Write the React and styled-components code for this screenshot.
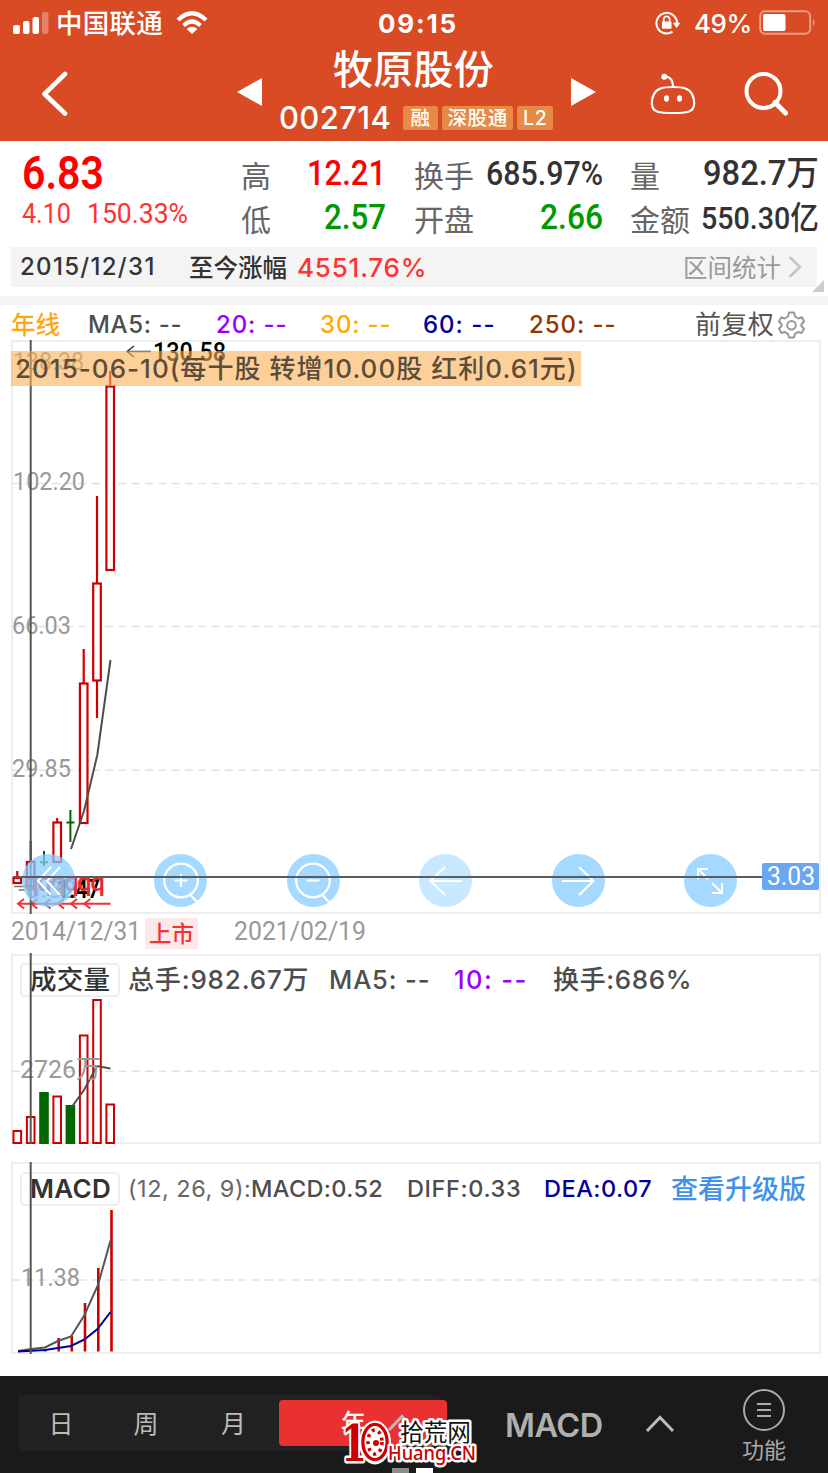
import React, { useLayoutEffect, useRef, useState } from 'react';
import styled, { createGlobalStyle } from 'styled-components';

const GlobalStyle = createGlobalStyle`
  * {
    box-sizing: border-box;
  }

  body {
    margin: 0;
    background: #fff;
    overflow: hidden;
    font-family: Inter, "Noto Sans CJK SC", sans-serif;
  }

  svg {
    display: block;
    flex: none;
  }
`;

const Page = styled.div`
  width: 828px;
  height: 1473px;
  display: flex;
  flex-direction: column;
  background: #fff;
`;

// Text fitted to a set width: numerals are squeezed, the rest is tracked
const FitBox = styled.span`
  display: block;
  flex: none;
  width: ${props => props.$w}px;
  margin-left: ${props => props.$ml || 0}px;
  padding-top: ${props => props.$drop || 0}px;
  white-space: pre;
  font-size: ${props => props.$size}px;
  font-weight: ${props => props.$weight || 500};
  font-family: ${props => props.$din ? 'Roboto' : 'Inter'}, "Noto Sans CJK SC", sans-serif;
  color: ${props => props.$color};
  line-height: 1.2;
`;

const FitInner = styled.span`
  display: inline-block;
  transform-origin: left center;
`;

const Fit = ({ w, ml, drop, size, weight, din, color = '#333', children }) => {
  const ref = useRef(null);
  const [fit, setFit] = useState(null);

  useLayoutEffect(() => {
    const natural = ref.current.getBoundingClientRect().width;
    if (din) {
      setFit({ transform: `scaleX(${w / natural})` });
    } else {
      setFit({ letterSpacing: `${(w - natural) / (children.length - 0.5)}px` });
    }
  }, []);

  return (
    <FitBox $w={w} $ml={ml} $drop={drop} $size={size} $weight={weight} $din={din} $color={color}>
      <FitInner ref={ref} style={fit}>{children}</FitInner>
    </FitBox>
  );
};

// Header
const Header = styled.header`
  height: 141px;
  background: #d94b25;
  color: #fff;
`;

const StatusBar = styled.div`
  display: flex;
  align-items: center;
  height: 46px;
  padding-left: 13px;
`;

const Nav = styled.div`
  display: flex;
  align-items: center;
  height: 95px;
  padding-left: 41px;
`;

const Spaced = styled.div`
  flex: none;
  margin: ${props => props.$top || 0}px 0 0 ${props => props.$left}px;
`;

const TitleBlock = styled.div`
  width: 274px;
  height: 95px;
  margin-left: 17px;
`;

const TitleLine = styled.div`
  display: flex;
  align-items: center;
  height: 46px;
  padding: 2px 0 0 54px;
`;

const CodeLine = styled.div`
  display: flex;
  align-items: center;
  height: 46px;
  margin-top: 3px;
`;

const Tag = styled.span`
  display: flex;
  align-items: center;
  justify-content: center;
  width: ${props => props.$w}px;
  height: 24px;
  margin-left: ${props => props.$ml}px;
  border-radius: 2px;
  background: #e58b46;
`;

// Quote
const Quote = styled.section`
  display: flex;
  height: 106px;
  padding: 11px 0 0 22px;
`;

const QuoteColumn = styled.div`
  width: ${props => props.$w}px;
  margin-left: ${props => props.$ml || 0}px;
`;

const QuoteRow = styled.div`
  display: flex;
  align-items: center;
  justify-content: ${props => props.$start ? 'flex-start' : 'space-between'};
  height: ${props => props.$h || 44}px;
`;

const QuoteLabel = styled.span`
  font-size: 30px;
  line-height: 36px;
  padding-top: 4px;
  color: #666;
`;

const RangeArea = styled.div`
  position: relative;
  height: 49px;
  padding: 0 11px;
`;

const RangeStrip = styled.div`
  display: flex;
  align-items: center;
  height: 40px;
  padding-left: 9px;
  background: #f4f4f4;
`;

const Corner = styled.div`
  position: absolute;
  right: 4px;
  bottom: 4px;
  border-left: 12px solid transparent;
  border-bottom: 12px solid #ccc;
`;

const Divider = styled.div`
  height: 9px;
  background: #f4f4f4;
`;

const Legend = styled.div`
  display: flex;
  align-items: center;
  height: ${props => props.$h}px;
  padding: ${props => props.$pt || 0}px 0 0 ${props => props.$pl || 0}px;
`;

// Charts
const Panel = styled.section`
  position: relative;
  width: 810px;
  height: ${props => props.$h}px;
  margin: ${props => props.$mt || 0}px 0 0 11px;
  padding: ${props => props.$pt || 0}px 0 0 7px;
  border: 2px solid #eee;
`;

const Plot = styled.svg`
  position: absolute;
  left: -13px;
  top: -2px;
  overflow: visible;
  font-family: Roboto, "Noto Sans CJK SC", sans-serif;
`;

const Banner = styled.div`
  position: absolute;
  top: 9px;
  left: -2px;
  display: flex;
  align-items: center;
  width: 570px;
  height: 35px;
  background: rgba(252, 177, 87, 0.6);
`;

const Tools = styled.div`
  position: absolute;
  left: 9px;
  top: 512px;
  display: flex;
  gap: 79.4px;
`;

const ToolButton = styled.button`
  display: flex;
  align-items: center;
  justify-content: center;
  width: 53px;
  height: 53px;
  padding: 0;
  border: 0;
  border-radius: 50%;
  background: rgba(135, 204, 255, 0.75);
  opacity: ${props => props.$off ? 0.6 : 1};
`;

const CrossLine = styled.div`
  position: absolute;
  left: 0;
  top: 534px;
  width: 750px;
  height: 2px;
  background: #5c5c5c;
`;

const PriceTag = styled.div`
  position: absolute;
  left: 749px;
  top: 521px;
  display: flex;
  align-items: center;
  width: 57px;
  height: 27px;
  border-radius: 2px;
  background: #6ba6f3;
`;

const DateRow = styled.div`
  display: flex;
  align-items: center;
  height: 40px;
  padding: 0 0 5px 11px;
`;

const ListedTag = styled.span`
  display: flex;
  align-items: center;
  justify-content: center;
  width: 53px;
  height: 31px;
  margin: 4px 0 0 4px;
  border-radius: 2px;
  background: #fde8ea;
`;

const IndicatorTab = styled.div`
  display: flex;
  align-items: center;
  width: 100px;
  height: 34px;
  border: 2px solid #eee;
  border-radius: 5px;
`;

// Bottom bar
const BottomBar = styled.footer`
  position: relative;
  display: flex;
  height: 97px;
  margin-top: 22px;
  padding: 19px 0 0 18px;
  background: #1a1a1a;
`;

const Periods = styled.div`
  display: flex;
  align-items: center;
  width: 422px;
  height: 56px;
  border-radius: 4px;
  background: #212121;
`;

const Period = styled.div`
  width: ${props => props.$w}px;
  flex: none;
  padding-bottom: 3px;
  text-align: center;
  font-size: 25px;
  color: #bbb;
`;

const ActivePeriod = styled.div`
  display: flex;
  align-items: center;
  flex: none;
  width: 168px;
  height: 46px;
  padding: 0 0 4px 62px;
  border-radius: 4px;
  background: #ea3131;
  font-size: 25px;
  font-weight: 500;
  color: #fff;
`;

const IndicatorPick = styled.div`
  display: flex;
  align-items: center;
  height: 58px;
  margin-left: 65px;
`;

const MoreMenu = styled.div`
  display: flex;
  flex-direction: column;
  align-items: center;
  width: 46px;
  height: 80px;
  margin: -7px 0 0 66px;
  gap: 5px;
`;

const Watermark = styled.div`
  position: absolute;
  left: 342px;
  top: 42px;
`;

const PageDots = styled.div`
  position: absolute;
  left: 392px;
  bottom: 0;
  display: flex;
  gap: 7px;
`;

const PageDot = styled.span`
  width: 17px;
  height: 5px;
  background: ${props => props.$on ? '#fff' : '#8c8c8c'};
`;

const RED = '#cc0000';
const GREEN = '#006600';

const candles = [
  { x: 17.3, top: 878, bottom: 883, high: 871, low: 883 },
  { x: 30.7, top: 862, bottom: 886, high: 841, low: 886 },
  { x: 57.2, top: 822.5, bottom: 862, high: 818, low: 862 },
  { x: 83.7, top: 683.5, bottom: 823, high: 649, low: 823 },
  { x: 97, top: 583.5, bottom: 680.5, high: 496, low: 718 },
  { x: 110.2, top: 386.5, bottom: 570, high: 371, low: 570 },
];

const dojis = [
  { x: 44, y: 862.3, high: 851, low: 866 },
  { x: 70.4, y: 822.6, high: 810, low: 842 },
];

const volumes = [
  { x: 17.3, top: 1131 },
  { x: 30.7, top: 1117 },
  { x: 44, top: 1093, down: true },
  { x: 57.2, top: 1096.5 },
  { x: 70.4, top: 1106, down: true },
  { x: 83.7, top: 1035.5 },
  { x: 97, top: 1000 },
  { x: 110.2, top: 1104.5 },
];

const macdBars = [[45, 1349], [58.7, 1338], [71.8, 1336], [85, 1303], [98.3, 1268], [111.5, 1210]];
const exRights = [18, 31.3, 44.6, 58, 71, 84.3];

const GridLine = ({ y }) => (
  <line x1="12" x2="820" y1={y} y2={y} stroke="#e2e2e2" strokeWidth="1.5" strokeDasharray="8 5.3" />
);

const AxisText = ({ x = 12, y, w = 59, size = 26.5, fill = '#999', weight = 400, children }) => (
  <text x={x} y={y} fontSize={size} fontWeight={weight} fill={fill} textLength={w} lengthAdjust="spacingAndGlyphs">{children}</text>
);

const Caret = () => (
  <svg width="30" height="18" fill="none" stroke="#bbb" strokeWidth="3">
    <path d="M2 16 15 2.5 28 16" />
  </svg>
);

const StatusIcons = () => (
  <>
    <svg width="36" height="24" fill="#fff">
      <rect x="0" y="14" width="7" height="9" rx="2" />
      <rect x="10" y="10" width="6.5" height="13" rx="2" />
      <rect x="19.5" y="6" width="6.5" height="17" rx="2" />
      <rect x="29" y="1" width="6.5" height="22" rx="2" opacity=".3" />
    </svg>
    <Fit w={107} ml={7} drop={2} size={26.5} color="#fff">中国联通</Fit>
    <Spaced $left={13}>
      <svg width="32" height="24" fill="none" stroke="#fff" strokeWidth="4.2">
        <path d="M2 9Q16-4.5 30 9M7.5 14.6Q16 6.5 24.5 14.6" />
        <path d="M10.6 18Q16 13.5 21.4 18L16 23Z" fill="#fff" stroke="none" />
      </svg>
    </Spaced>
    <Fit w={79} ml={170} size={26} drop={1} weight={700} color="#fff">09:15</Fit>
    <Spaced $left={198}>
      <svg width="26" height="24" fill="none" stroke="#fff" strokeWidth="2">
        <path d="M22 13A10.3 10.3 0 1 0 17.5 20.7" />
        <path d="M17.8 11.8h7.6L21.6 17Z" fill="#fff" stroke="none" />
        <rect x="7" y="10.5" width="9.5" height="7.2" fill="#fff" stroke="none" />
        <path d="M8.7 11V8.4a3 3 0 0 1 6 0V11" strokeWidth="1.7" />
      </svg>
    </Spaced>
    <Fit w={58} ml={13} drop={1} size={26} color="#fff">49%</Fit>
    <Spaced $left={7}>
      <svg width="58" height="26">
        <rect x="1.2" y="1.2" width="50" height="22.5" rx="5" fill="none" stroke="#fff" strokeWidth="2" opacity=".45" />
        <rect x="4" y="4" width="22.5" height="17" rx="2" fill="#fff" />
        <path d="M54 8.5Q57 12.5 54 16.5Z" fill="#fff" opacity=".45" />
      </svg>
    </Spaced>
  </>
);

const App = () => (
  <Page>
    <GlobalStyle />

    <Header>
      <StatusBar>
        <StatusIcons />
      </StatusBar>
      <Nav>
        <svg width="27" height="48" fill="none" stroke="#fff" strokeWidth="4.6" strokeLinecap="round" strokeLinejoin="round">
          <path d="M24 4 3.5 24 24 43.5" />
        </svg>
        <Spaced $left={169} $top={-4}>
          <svg width="25" height="28" fill="#fff"><path d="M25 0V28L0 14Z" /></svg>
        </Spaced>
        <TitleBlock>
          <TitleLine>
            <Fit w={161} size={40} color="#fff">牧原股份</Fit>
          </TitleLine>
          <CodeLine>
            <Fit w={112} size={31} color="#fff">002714</Fit>
            <Tag $w={35} $ml={12}><Fit w={20} size={19.5} drop={2} color="#fff">融</Fit></Tag>
            <Tag $w={71} $ml={4}><Fit w={60} size={19.5} drop={2} color="#fff">深股通</Fit></Tag>
            <Tag $w={36} $ml={4}><Fit w={24} size={19.5} drop={1} color="#fff">L2</Fit></Tag>
          </CodeLine>
        </TitleBlock>
        <Spaced $left={18} $top={-4}>
          <svg width="25" height="28" fill="#fff"><path d="M0 0V28L25 14Z" /></svg>
        </Spaced>
        <Spaced $left={54}>
          <svg width="46" height="44" fill="none" stroke="#fff" strokeWidth="2.2">
            <path d="M23 15C34 15 39 16.5 42 22C44 26 44.7 31 43.5 35C42.3 39.5 38 41 23 41S3.7 39.5 2.5 35C1.3 31 2 26 4 22C7 16.5 12 15 23 15Z" />
            <path d="M14.5 4.5C20 4.5 23 8 23 15" />
            <circle cx="14.3" cy="4.7" r="3" fill="#fff" stroke="none" />
            <ellipse cx="16.5" cy="26.5" rx="2.5" ry="3.3" fill="#fff" stroke="none" />
            <ellipse cx="29.5" cy="26.5" rx="2.5" ry="3.3" fill="#fff" stroke="none" />
          </svg>
        </Spaced>
        <Spaced $left={47}>
          <svg width="46" height="46" fill="none" stroke="#fff">
            <circle cx="20.5" cy="20" r="17" strokeWidth="4" />
            <path d="M32 31.5 42.5 42" strokeWidth="5" strokeLinecap="round" />
          </svg>
        </Spaced>
      </Nav>
    </Header>

    <Quote>
      <QuoteColumn $w={219}>
        <QuoteRow $start>
          <Fit w={82} size={46} weight={600} din color="#ff0000">6.83</Fit>
        </QuoteRow>
        <QuoteRow $start $h={35}>
          <Fit w={49} size={27.5} weight={400} din color="#ff3333">4.10</Fit>
          <Fit w={101} ml={16} size={27.5} weight={400} din color="#ff3333">150.33%</Fit>
        </QuoteRow>
      </QuoteColumn>
      <QuoteColumn $w={145}>
        <QuoteRow><QuoteLabel>高</QuoteLabel><Fit w={79} size={35} din color="#ff0000">12.21</Fit></QuoteRow>
        <QuoteRow><QuoteLabel>低</QuoteLabel><Fit w={62} size={35} din color="#009900">2.57</Fit></QuoteRow>
      </QuoteColumn>
      <QuoteColumn $w={189} $ml={28}>
        <QuoteRow><QuoteLabel>换手</QuoteLabel><Fit w={117} size={33} din>685.97%</Fit></QuoteRow>
        <QuoteRow><QuoteLabel>开盘</QuoteLabel><Fit w={63} size={35} din color="#009900">2.66</Fit></QuoteRow>
      </QuoteColumn>
      <QuoteColumn $w={189} $ml={27}>
        <QuoteRow><QuoteLabel>量</QuoteLabel><Fit w={116} size={34.5} din>982.7万</Fit></QuoteRow>
        <QuoteRow><QuoteLabel>金额</QuoteLabel><Fit w={118} size={32} din>550.30亿</Fit></QuoteRow>
      </QuoteColumn>
    </Quote>

    <RangeArea>
      <RangeStrip>
        <Fit w={135} size={24} drop={1}>2015/12/31</Fit>
        <Fit w={98} ml={34} drop={3} size={24.5}>至今涨幅</Fit>
        <Fit w={130} ml={10} size={26} drop={1} color="#ff3333">4551.76%</Fit>
        <Fit w={98} ml={256} drop={3} size={24.5} weight={400} color="#999">区间统计</Fit>
        <Spaced $left={7}>
          <svg width="14" height="22" fill="none" stroke="#c4c4c4" strokeWidth="2.5">
            <path d="M1.5 1 12 11 1.5 21" />
          </svg>
        </Spaced>
      </RangeStrip>
      <Corner />
    </RangeArea>
    <Divider />

    <Legend $h={35} $pl={11} $pt={4}>
      <Fit w={49} drop={2} size={24.5} color="#ffa812">年线</Fit>
      <Fit w={94} ml={28} drop={1} size={24} color="#4d4d4d">MA5: --</Fit>
      <Fit w={71} ml={34} drop={1} size={24} color="#9900ff">20: --</Fit>
      <Fit w={71} ml={33} drop={1} size={24} color="#ffaa00">30: --</Fit>
      <Fit w={72} ml={32} drop={1} size={24} color="#000099">60: --</Fit>
      <Fit w={87} ml={34} drop={1} size={24} color="#993300">250: --</Fit>
      <Fit w={79} ml={79} drop={1} size={26} weight={400} color="#555">前复权</Fit>
      <Spaced $left={4}>
        <svg width="27" height="28" viewBox="0 0 27 28" fill="none" stroke="#999" strokeWidth="2">
          <path d="M11 1.5H16L17 5.5L20.5 7.5L24 6.3L26 10.5L23.4 13.5V15L26 17.8L23.6 22L20.3 21L17 22.8L16 26.5H11L10 22.8L6.7 21L3.4 22L1 17.8L3.6 15V13.5L1 10.5L3.4 6.3L6.7 7.5L10 5.5Z" strokeLinejoin="round" />
          <circle cx="13.5" cy="14.2" r="4.3" />
        </svg>
      </Spaced>
    </Legend>

    <Panel $h={574}>
      <Plot width="828" height="574" viewBox="0 340 828 574">
        <GridLine y={483.5} />
        <GridLine y={626.5} />
        <GridLine y={770.3} />
        <AxisText x={13} y={370} w={71}>138.38</AxisText>
        <AxisText x={13} y={490} w={72}>102.20</AxisText>
        <AxisText y={633.5}>66.03</AxisText>
        <AxisText y={777}>29.85</AxisText>
        <AxisText x={18} y={897.5}>-6.32</AxisText>
        <path d="M127 351.5H151M134 346 127 351.5 134 357" fill="none" stroke="#333" strokeWidth="1.5" />
        <AxisText x={153} y={361} w={73} size={26} weight={500} fill="#000">130.58</AxisText>
        <path d="M14 886.5H30" stroke="#777" strokeWidth="1.5" />
        <text x="57" y="898" fontSize="25" fontWeight="600" fill="#000" textLength="43" lengthAdjust="spacingAndGlyphs">1.47</text>
        <g fill="#fff" stroke={RED} strokeWidth="2.2">
          {candles.map(c => (
            <g key={c.x}>
              <path d={`M${c.x} ${c.high}V${c.top}M${c.x} ${c.bottom}V${c.low}`} />
              <rect x={c.x - 3.8} y={c.top} width="7.6" height={c.bottom - c.top} fillOpacity={c.x > 80 ? 1 : 0} />
            </g>
          ))}
        </g>
        {dojis.map(d => (
          <path key={d.x} d={`M${d.x} ${d.high}V${d.low}M${d.x - 4} ${d.y}H${d.x + 4}`} stroke={GREEN} strokeWidth="2" />
        ))}
        <path d="M71 849 84 811 97.3 755 110.5 660" fill="none" stroke="#4d4d4d" strokeWidth="2" />
        <g stroke="#ee3333" strokeWidth="2" fill="none">
          <path d="M18 903.7H110.5" />
          {exRights.map(x => <path key={x} d={`M${x + 6} 899 ${x} 903.7 ${x + 6} 908.5`} />)}
        </g>
        <g fill="#e62e2e" fontSize="26" fontWeight="500">
          {exRights.map(x => <text key={x} x={x + 6} y="891">q</text>)}
        </g>
        <path d="M30.7 340V914" stroke="#555" strokeWidth="2" />
      </Plot>
      <Banner>
        <Fit w={562} ml={4} size={26} color="#5c4c39">2015-06-10(每十股 转增10.00股 红利0.61元)</Fit>
      </Banner>
      <Tools>
        <ToolButton>
          <svg width="26" height="30" fill="none" stroke="#fff" strokeWidth="2"><path d="M15 1 2 15 15 29M24 1 11 15 24 29" /></svg>
        </ToolButton>
        <ToolButton>
          <svg width="40" height="44" fill="none" stroke="#fff" strokeWidth="2.2">
            <circle cx="20" cy="21.5" r="16.8" />
            <path d="M29.5 36 36 43M13.5 21.5H26.5M20 15V28" />
          </svg>
        </ToolButton>
        <ToolButton>
          <svg width="40" height="44" fill="none" stroke="#fff" strokeWidth="2.2">
            <circle cx="20" cy="21.5" r="16.8" />
            <path d="M29.5 36 36 43M13.5 21.5H26.5" />
          </svg>
        </ToolButton>
        <ToolButton $off>
          <svg width="34" height="30" fill="none" stroke="#fff" strokeWidth="2.2"><path d="M1 15H33M16 1 1.5 15 16 29" /></svg>
        </ToolButton>
        <ToolButton>
          <svg width="34" height="30" fill="none" stroke="#fff" strokeWidth="2.2"><path d="M1 15H33M18 1 32.5 15 18 29" /></svg>
        </ToolButton>
        <ToolButton>
          <svg width="28" height="28" fill="none" stroke="#fff" strokeWidth="2"><path d="M2 12V2H12M2 2 12 12M16 26H26V16M26 26 16 16" /></svg>
        </ToolButton>
      </Tools>
      <CrossLine />
      <PriceTag><Fit w={48} ml={5} size={26} weight={400} din color="#fff">3.03</Fit></PriceTag>
    </Panel>

    <DateRow>
      <Fit w={130} size={26} weight={400} din color="#999">2014/12/31</Fit>
      <ListedTag><Fit w={45} size={22.5} color="#f03535">上市</Fit></ListedTag>
      <Fit w={132} ml={36} size={26} weight={400} din color="#999">2021/02/19</Fit>
    </DateRow>

    <Panel $h={190} $pt={7}>
      <Plot width="828" height="190" viewBox="0 954 828 190">
        <GridLine y={1071.3} />
        {volumes.map(v => (
          <rect
            key={v.x}
            x={v.x - 3.8}
            y={v.top}
            width="7.6"
            height={1143 - v.top}
            fill={v.down ? GREEN : '#fff'}
            stroke={v.down ? GREEN : RED}
            strokeWidth="2"
          />
        ))}
        <path d="M71 1108 84 1090 97 1066 110.5 1068.5" fill="none" stroke="#4d4d4d" strokeWidth="2" />
        <AxisText x={20} y={1077.5} w={81}>2726万</AxisText>
        <path d="M30.7 953V1144" stroke="#555" strokeWidth="2" />
      </Plot>
      <Legend $h={34}>
        <IndicatorTab><Fit w={80} ml={8} size={26.5}>成交量</Fit></IndicatorTab>
        <Fit w={181} ml={8} size={26} color="#4d4d4d">总手:982.67万</Fit>
        <Fit w={101} ml={20} size={25.5} color="#4d4d4d">MA5: --</Fit>
        <Fit w={73} ml={24} size={25.5} color="#9900ff">10: --</Fit>
        <Fit w={139} ml={26} size={26} color="#4d4d4d">换手:686%</Fit>
      </Legend>
    </Panel>

    <Panel $h={192} $mt={18} $pt={8}>
      <Plot width="828" height="192" viewBox="0 1162 828 192">
        <GridLine y={1280} />
        <AxisText x={21} y={1286}>11.38</AxisText>
        {macdBars.map(([x, y]) => (
          <path key={x} d={`M${x} ${y}V1351.5`} stroke={RED} strokeWidth="2.6" />
        ))}
        <path d="M18 1351 31 1349 45 1347.5 58 1341 71 1336.5 84.5 1315 98 1285 110.5 1240.5" fill="none" stroke="#555" strokeWidth="2" />
        <path d="M18 1351.5 45 1350 58 1348 71 1346 84.5 1339.5 97.5 1329 110.5 1312" fill="none" stroke="#000099" strokeWidth="2" />
        <path d="M30.7 1162V1354" stroke="#555" strokeWidth="2" />
      </Plot>
      <Legend $h={34}>
        <IndicatorTab><Fit w={81} ml={8} size={26} weight={600}>MACD</Fit></IndicatorTab>
        <Fit w={123} ml={8} size={23.5} weight={400} color="#666">(12, 26, 9):</Fit>
        <Fit w={132} size={23.5} color="#4d4d4d">MACD:0.52</Fit>
        <Fit w={114} ml={24} size={23.5} color="#4d4d4d">DIFF:0.33</Fit>
        <Fit w={108} ml={23} size={23.5} color="#000099">DEA:0.07</Fit>
        <Fit w={135} ml={19} drop={2} size={27} color="#4291e8">查看升级版</Fit>
      </Legend>
    </Panel>

    <BottomBar>
      <Periods>
        <Period $w={86}>日</Period>
        <Period $w={84}>周</Period>
        <Period $w={91}>月</Period>
        <ActivePeriod>
          年
          <Spaced $left={21} $top={4}><Caret /></Spaced>
        </ActivePeriod>
      </Periods>
      <IndicatorPick>
        <Fit w={98} size={32.5} drop={2} weight={600} color="#b0b0b0">MACD</Fit>
        <Spaced $left={42}><Caret /></Spaced>
      </IndicatorPick>
      <MoreMenu>
        <svg width="44" height="44" fill="none" stroke="#aaa" strokeWidth="2">
          <circle cx="22" cy="22" r="20" />
          <path d="M15 16H29M15 22H29M15 28H29" />
        </svg>
        <Fit w={44} size={22} weight={400} color="#aaa">功能</Fit>
      </MoreMenu>
      <PageDots>
        <PageDot />
        <PageDot $on />
      </PageDots>
      <Watermark>
        <svg width="140" height="50" overflow="visible" paintOrder="stroke" strokeLinejoin="round">
          <path d="M62 30H98" stroke="#111" strokeWidth="2" />
          <ellipse cx="33" cy="24.5" rx="16" ry="22" fill="#fff" />
          <text x="-1" y="43" fontFamily="DejaVu Serif" fontSize="50" fontWeight="700" fill="#c00" stroke="#fff" strokeWidth="5" textLength="26" lengthAdjust="spacingAndGlyphs">1</text>
          <ellipse cx="33" cy="24" rx="10.5" ry="16" fill="#fff" stroke="#c00" strokeWidth="6.5" />
          <ellipse cx="33" cy="24" rx="7" ry="12" fill="none" stroke="#c00" strokeWidth="3.5" strokeDasharray="3 4" />
          <circle cx="34" cy="25" r="3" fill="#c00" />
          <text x="58" y="23" fontFamily="Noto Sans CJK SC" fontSize="23.5" fill="#111" stroke="#fff" strokeWidth="5" textLength="71" lengthAdjust="spacingAndGlyphs">拾荒网</text>
          <text x="46" y="42" fontFamily="Noto Sans" fontSize="20" fontWeight="500" fill="#c00" stroke="#fff" strokeWidth="5" textLength="88" lengthAdjust="spacingAndGlyphs">Huang.CN</text>
        </svg>
      </Watermark>
    </BottomBar>
  </Page>
);

export default App;
